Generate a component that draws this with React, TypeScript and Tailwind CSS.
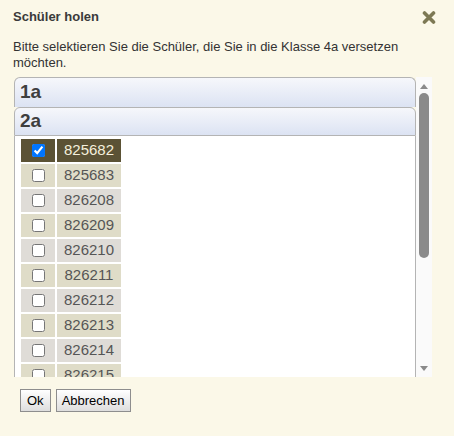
import { useState } from 'react'

const ROWS = ['825682', '825683', '826208', '826209', '826210', '826211', '826212', '826213', '826214', '826215']

function CloseIcon() {
  return (
    <svg width="14" height="13" viewBox="0 0 14 13" className="block">
      <path d="M2.5 2 L11.5 11 M11.5 2 L2.5 11" stroke="#7d7954" strokeWidth="3.6" strokeLinecap="round" />
    </svg>
  )
}

function Header({ label, last }: { label: string; last?: boolean }) {
  return (
    <div
      className={
        'flex items-center pl-[5px] rounded-t-[6px] border-t border-x border-[#b4b4b4] bg-gradient-to-b from-[#f6f7fb] to-[#dce3f3] text-[19px] font-bold text-[#3e3e3e] ' +
        (last ? 'h-[29px] border-b' : 'h-[30px]')
      }
    >
      {label}
    </div>
  )
}

export default function App() {
  const [checked, setChecked] = useState<Record<string, boolean>>({ '825682': true })

  return (
    <div
      className="w-[454px] h-[436px] bg-[#fbf8e8] text-[#333] overflow-hidden"
      style={{ fontFamily: '"Liberation Sans", Arial, sans-serif' }}
    >
      <div className="flex items-center justify-between pt-[10px] pl-[13px] pr-[18px] h-[24px]">
        <span className="text-[13px] leading-[14px] font-bold text-[#3a3a3a]">Schüler holen</span>
        <CloseIcon />
      </div>

      <p className="mt-[15px] pl-[13px] pr-[20px] text-[13px] leading-[16px] text-[#333]">
        Bitte selektieren Sie die Schüler, die Sie in die Klasse 4a versetzen möchten.
      </p>

      <div className="mt-[6px] ml-[14px] w-[418px] h-[300px] flex">
        <div className="flex-1 flex flex-col overflow-hidden">
          <Header label="1a" />
          <Header label="2a" last />
          <div className="flex-1 bg-white border-x border-[#b4b4b4] pt-[3px] pl-[6px] flex flex-col gap-[2px] overflow-hidden">
            {ROWS.map((id, i) => {
              const sel = !!checked[id]
              const bg = sel ? 'bg-[#5b5235]' : i % 2 === 1 ? 'bg-[#dfdcc8]' : 'bg-[#dfdcd7]'
              return (
                <div key={id} className="flex gap-[2px] shrink-0">
                  <div className={'w-[34px] h-[23px] flex items-center justify-center ' + bg}>
                    <input
                      type="checkbox"
                      checked={sel}
                      onChange={() => setChecked((c) => ({ ...c, [id]: !c[id] }))}
                      className="m-0 w-[13px] h-[13px]"
                    />
                  </div>
                  <div
                    className={
                      'w-[64px] h-[23px] flex items-center justify-center text-[15px] ' +
                      bg +
                      (sel ? ' text-[#f4efdc]' : ' text-[#555]')
                    }
                  >
                    {id}
                  </div>
                </div>
              )
            })}
          </div>
        </div>

        <div className="w-[16px] bg-[#fafafa] flex flex-col items-center">
          <svg width="10" height="8" viewBox="0 0 10 8" className="mt-[5px] shrink-0">
            <path d="M1 7 L5 2 L9 7 Z" fill="#8a8a8a" />
          </svg>
          <div className="mt-[3px] w-[10px] h-[165px] rounded-[5px] bg-[#8a8a8a] shrink-0" />
          <div className="flex-1" />
          <svg width="10" height="8" viewBox="0 0 10 8" className="mb-[4px] shrink-0">
            <path d="M1 1 L9 1 L5 6 Z" fill="#8a8a8a" />
          </svg>
        </div>
      </div>

      <div className="mt-[12px] ml-[20px] flex gap-[5px]">
        <button className="h-[23px] px-[6px] text-[13px] text-black border border-[#8e8e8e] bg-gradient-to-b from-[#ffffff] to-[#dedede]">
          Ok
        </button>
        <button className="h-[23px] px-[5px] text-[13px] text-black border border-[#8e8e8e] bg-gradient-to-b from-[#ffffff] to-[#dedede]">
          Abbrechen
        </button>
      </div>
    </div>
  )
}
